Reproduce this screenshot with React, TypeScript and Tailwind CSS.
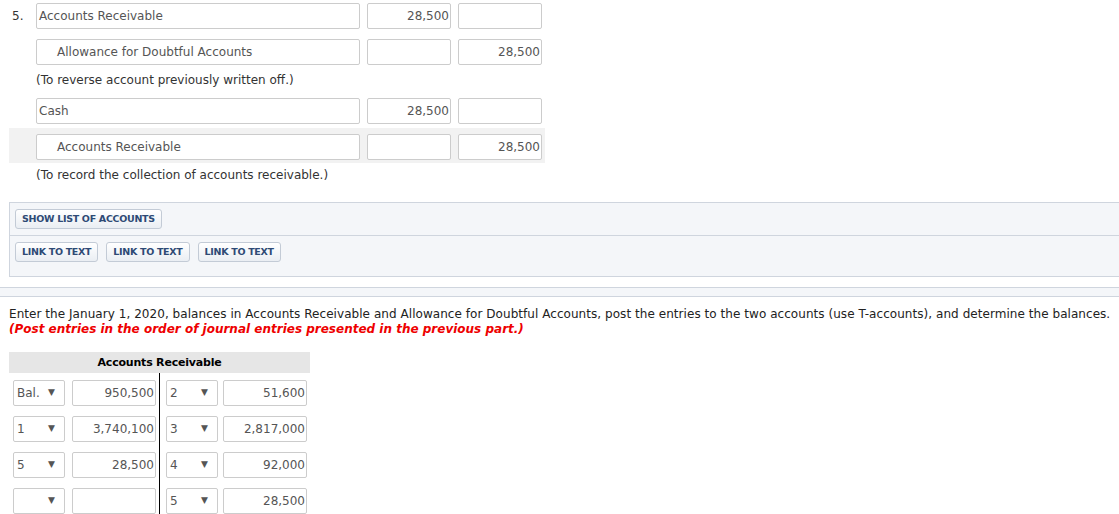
import React from "react"

type JRow = { account: string; indent?: boolean; debit?: string; credit?: string; shaded?: boolean }

function Box({ className = "", children }: { className?: string; children?: React.ReactNode }) {
  return (
    <div className={`h-[26px] border border-[#cccccc] rounded-[2px] bg-white flex items-center text-[#555555] ${className}`}>
      {children}
    </div>
  )
}

function JournalRow({ row, label }: { row: JRow; label?: string }) {
  return (
    <div className="flex items-start">
      <div className="w-[27px] pl-[3px] pt-[4px] text-[#333333]">{label}</div>
      <Box className={`w-[324px] ${row.indent ? "pl-[20px]" : "pl-[2px]"}`}>{row.account}</Box>
      <Box className="ml-[7px] w-[84px] justify-end pr-[1px]">{row.debit}</Box>
      <Box className="ml-[7px] w-[84px] justify-end pr-[1px]">{row.credit}</Box>
    </div>
  )
}

function Btn({ children, className = "" }: { children: React.ReactNode; className?: string }) {
  return (
    <div
      className={`h-[20px] flex items-center px-[6px] border border-[#c3cbd6] rounded-[3px] bg-gradient-to-b from-white to-[#eaeef3] text-[9.5px] tracking-[-0.3px] font-bold text-[#2e4a75] ${className}`}
    >
      {children}
    </div>
  )
}

function Select({ value }: { value: string }) {
  return (
    <div className="h-[26px] w-[52px] border border-[#cccccc] rounded-[2px] bg-white flex items-center justify-between pl-[3px] pr-[9px] text-[#555555]">
      <span>{value}</span>
      <span className="text-[9px] text-[#555555]">▼</span>
    </div>
  )
}

const left = [
  { ref: "Bal.", amt: "950,500" },
  { ref: "1", amt: "3,740,100" },
  { ref: "5", amt: "28,500" },
  { ref: "", amt: "" },
]
const right = [
  { ref: "2", amt: "51,600" },
  { ref: "3", amt: "2,817,000" },
  { ref: "4", amt: "92,000" },
  { ref: "5", amt: "28,500" },
]

export default function App() {
  return (
    <div className="w-[1119px] h-[514px] overflow-hidden bg-white font-['DejaVu_Sans',Verdana,sans-serif] text-[12px] text-[#333333]">
      {/* Journal entries */}
      <div className="pl-[9px]">
        <div className="pt-[3px]">
          <JournalRow label="5." row={{ account: "Accounts Receivable", debit: "28,500" }} />
        </div>
        <div className="mt-[10px]">
          <JournalRow row={{ account: "Allowance for Doubtful Accounts", indent: true, credit: "28,500" }} />
        </div>
        <div className="mt-[6px] h-[18px] leading-[18px] pl-[27px]">(To reverse account previously written off.)</div>
        <div className="mt-[9px]">
          <JournalRow row={{ account: "Cash", debit: "28,500" }} />
        </div>
        <div className="mt-[4px] w-[536px] bg-[#f2f2f2] pt-[6px] pb-[3px]">
          <JournalRow row={{ account: "Accounts Receivable", indent: true, credit: "28,500" }} />
        </div>
        <div className="mt-[3px] h-[18px] leading-[18px] pl-[27px]">(To record the collection of accounts receivable.)</div>
      </div>

      {/* Button panel */}
      <div className="ml-[9px] mt-[18px] w-[1120px] border border-[#cfd5de] bg-[#f4f6f9]">
        <div className="flex pl-[5px] pt-[6px] pb-[6px] border-b border-[#cfd5de]">
          <Btn>SHOW LIST OF ACCOUNTS</Btn>
        </div>
        <div className="flex gap-[8px] pl-[5px] pt-[6px] pb-[14px]">
          <Btn>LINK TO TEXT</Btn>
          <Btn>LINK TO TEXT</Btn>
          <Btn>LINK TO TEXT</Btn>
        </div>
      </div>

      <div className="mt-[10px] h-[10px] border-y border-[#cfd5de] bg-[#f4f6f9]" />

      {/* Instructions */}
      <div className="pl-[9px] pt-[10px] leading-[15px] text-[#222222]">
        <div className="tracking-[0.05px]">
          Enter the January 1, 2020, balances in Accounts Receivable and Allowance for Doubtful Accounts, post the entries to the two accounts (use T-accounts), and determine the balances.
        </div>
        <div className="font-bold italic text-[#ee0000]">(Post entries in the order of journal entries presented in the previous part.)</div>
      </div>

      {/* T-account */}
      <div className="ml-[9px] mt-[15px] w-[301px]">
        <div className="h-[21px] pt-[1px] bg-[#e6e6e6] flex items-center justify-center font-bold text-[11px] tracking-[-0.2px] text-black">Accounts Receivable</div>
        <div className="flex">
          <div className="w-[150px] pl-[4px] pt-[7px] flex flex-col gap-[10px]">
            {left.map((r, i) => (
              <div key={i} className="flex gap-[7px]">
                <Select value={r.ref} />
                <Box className="w-[84px] justify-end pr-[1px]">{r.amt}</Box>
              </div>
            ))}
          </div>
          <div className="w-[151px] border-l border-black pl-[6px] pt-[7px] flex flex-col gap-[10px]">
            {right.map((r, i) => (
              <div key={i} className="flex gap-[5px]">
                <Select value={r.ref} />
                <Box className="w-[84px] justify-end pr-[1px]">{r.amt}</Box>
              </div>
            ))}
          </div>
        </div>
      </div>
    </div>
  )
}
